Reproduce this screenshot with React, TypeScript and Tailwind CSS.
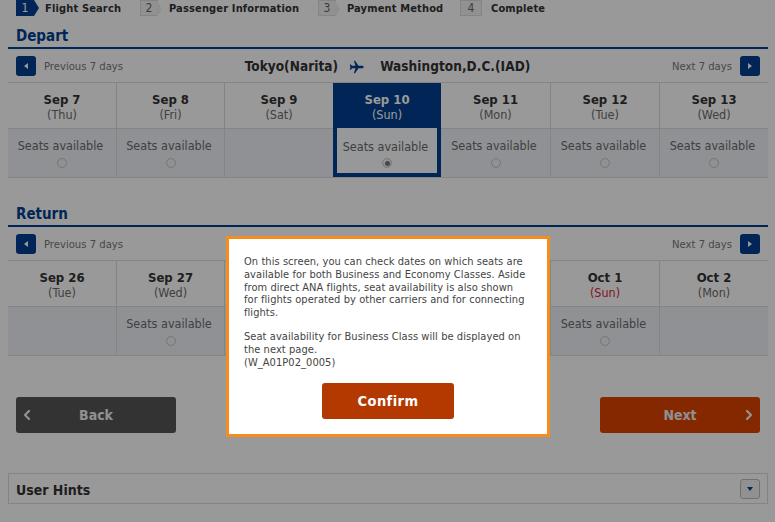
import React from 'react';
import { ChevronLeft, ChevronRight } from 'lucide-react';

interface Day {
  date: string;
  week: string;
  seats?: boolean;
  selected?: boolean;
  sunday?: boolean;
}

const departDays: Day[] = [
  { date: 'Sep 7', week: '(Thu)', seats: true },
  { date: 'Sep 8', week: '(Fri)', seats: true },
  { date: 'Sep 9', week: '(Sat)' },
  { date: 'Sep 10', week: '(Sun)', seats: true, selected: true },
  { date: 'Sep 11', week: '(Mon)', seats: true },
  { date: 'Sep 12', week: '(Tue)', seats: true },
  { date: 'Sep 13', week: '(Wed)', seats: true },
];

// the three middle days sit behind the dialog and can't be read
const returnDays: Day[] = [
  { date: 'Sep 26', week: '(Tue)' },
  { date: 'Sep 27', week: '(Wed)', seats: true },
  { date: '', week: '' },
  { date: '', week: '' },
  { date: '', week: '' },
  { date: 'Oct 1', week: '(Sun)', seats: true, sunday: true },
  { date: 'Oct 2', week: '(Mon)' },
];

const steps = [
  { n: '1', label: 'Flight Search', w: 'w-[124px]' },
  { n: '2', label: 'Passenger Information', w: 'w-[178px]' },
  { n: '3', label: 'Payment Method', w: 'w-[142px]' },
  { n: '4', label: 'Complete', w: 'w-auto' },
];

const Plane = () => (
  <svg width="15" height="14" viewBox="0 0 16 14" className="text-[#003f8f]">
    <path
      fill="currentColor"
      d="M5.2 0.4h1.300l3.600 5.300h3.600c1 0 1.900 0.500 1.900 1.300s-0.900 1.300-1.900 1.300h-3.600l-3.600 5.300H5.200l1.700-5.300H3.200l-1.200 1.500H0.800L1.500 7 0.800 4.200h1.200l1.200 1.500h3.700z"
    />
  </svg>
);

const Radio = ({ checked }: { checked?: boolean }) => (
  <span className="flex h-[10px] w-[10px] items-center justify-center rounded-full border border-[#c4c4c4] bg-[#f2f2f2]">
    {checked && <span className="h-[5px] w-[5px] rounded-full bg-[#777]" />}
  </span>
);

const PageButton = ({ dir }: { dir: 'prev' | 'next' }) => (
  <span className="flex h-5 w-5 items-center justify-center rounded-[3px] bg-[#003f8f]">
    <svg width="4" height="6" viewBox="0 0 4 6">
      <path fill="#fff" d={dir === 'prev' ? 'M4 0v6L0 3z' : 'M0 0v6l4-3z'} />
    </svg>
  </span>
);

const Calendar = ({ days }: { days: Day[] }) => (
  <div className="grid grid-cols-[108px_108px_109px_108px_109px_109px_109px] border-y border-[#dcdcdc]">
    {days.map((d, i) => (
      <div
        key={i}
        className={`flex h-[94px] flex-col ${i > 0 && !d.selected && !days[i - 1].selected ? 'border-l border-[#dcdcdc]' : ''} ${d.selected ? 'bg-[#003f8f]' : ''}`}
      >
        <div className={`flex h-[45px] flex-col items-center justify-center pt-[2px] leading-[15px] ${d.selected ? 'text-white' : 'text-[#333]'}`}>
          <span className="text-[13px] font-bold">{d.date}</span>
          <span className={`text-[12.5px] ${d.selected ? '' : d.sunday ? 'text-[#e0263c]' : 'text-[#6b6b6b]'}`}>{d.week}</span>
        </div>
        {d.selected ? (
          <div className="mx-1 mb-[4px] flex flex-1 flex-col items-center bg-[#fbfdff] pt-[11px] text-[12.5px] leading-[15px] text-[#6b6b6b]">
            <span className="mr-[3px]">Seats available</span>
            <span className="mt-[4px]"><Radio checked /></span>
          </div>
        ) : (
          <div className="flex flex-1 flex-col items-center border-t border-[#dcdcdc] bg-[#eff2f8] pt-[9px] text-[12.5px] leading-[15px] text-[#6b6b6b]">
            {d.seats && <span className="mr-[3px]">Seats available</span>}
            {d.seats && <span className="mt-[5px]"><Radio /></span>}
          </div>
        )}
      </div>
    ))}
  </div>
);

const Section = ({ title, days, route }: { title: string; days: Day[]; route?: boolean }) => (
  <section>
    <h2 className="border-b-2 border-[#003f8f] pb-[2px] pl-2 text-[15px] leading-[18px] font-bold text-[#003f8f]">{title}</h2>
    <div className="flex h-[33px] items-center justify-between px-2">
      <div className="flex items-center gap-2 text-[11.2px] text-[#777]">
        <PageButton dir="prev" />
        <span className="pt-[3px]">Previous 7 days</span>
      </div>
      {route && (
        <div className="mt-[2px] mr-[20px] flex items-center text-[13.5px] font-bold tracking-[0.05px] text-[#333]">
          <span>Tokyo(Narita)</span>
          <span className="mr-[16px] ml-[11px]"><Plane /></span>
          <span>Washington,D.C.(IAD)</span>
        </div>
      )}
      <div className="flex items-center gap-2 text-[11.2px] text-[#777]">
        <span className="pt-[3px]">Next 7 days</span>
        <PageButton dir="next" />
      </div>
    </div>
    <Calendar days={days} />
  </section>
);

export default function App() {
  return (
    <div className="relative h-[522px] w-[775px] overflow-hidden bg-white font-['DejaVu_Sans_Condensed','DejaVu_Sans','Liberation_Sans',sans-serif]">
      <div className="pr-[7px] pl-2">
        <ol className="flex h-[16px] items-center pl-2">
          {steps.map((s, i) => (
            <li key={s.n} className={`flex items-center ${s.w}`}>
              <span
                className={`relative flex h-4 items-center justify-center text-xs ${i === 3 ? 'w-[22px]' : 'w-[18px]'} ${i === 0 ? 'bg-[#003f8f] text-white' : 'border border-[#ddd] bg-[#f2f2f2] text-[#666]'}`}
              >
                {s.n}
                {i < 3 && (
                  <span
                    className={`absolute top-0 left-full h-0 w-0 border-y-[8px] border-l-[5px] border-y-transparent ${i === 0 ? 'border-l-[#003f8f]' : 'border-l-[#eee]'}`}
                  />
                )}
              </span>
              <span className={`mt-[3px] text-[11px] font-bold tracking-[0.15px] text-[#333] ${i === 3 ? 'ml-[9px]' : 'ml-[11px]'}`}>{s.label}</span>
            </li>
          ))}
        </ol>
        <div className="mt-[11px]">
          <Section title="Depart" days={departDays} route />
        </div>
        <div className="mt-[27px]">
          <Section title="Return" days={returnDays} />
        </div>
        <div className="mt-[41px] flex justify-between px-2">
          <button className="relative h-9 w-40 rounded-[3px] bg-[#555] text-sm font-bold text-[#f0f0f0]">
            <ChevronLeft className="absolute top-[10px] left-[3px] h-4 w-4" strokeWidth={3.5} />
            Back
          </button>
          <button className="relative h-9 w-40 rounded-[3px] bg-[#de4300] text-sm font-bold text-[#f0f0f0]">
            Next
            <ChevronRight className="absolute top-[10px] right-[3px] h-4 w-4" strokeWidth={3.5} />
          </button>
        </div>
        <div className="mt-10 flex h-[31px] items-center justify-between border border-[#dcdcdc] pr-[7px] pl-[7px] text-sm font-bold text-[#333]">
          <span className="pt-[2px]">User Hints</span>
          <span className="flex h-5 w-5 items-center justify-center rounded-[3px] border border-[#bbb] bg-[#f2f2f2]">
            <svg width="6" height="4" viewBox="0 0 6 4">
              <path fill="#003f8f" d="M0 0h6L3 4z" />
            </svg>
          </span>
        </div>
      </div>

      <div className="absolute inset-0 bg-black/40" />

      <div className="absolute top-[236px] left-[226px] h-[201px] w-[324px] border-[3px] border-[#f68b1f] bg-white pt-[17px] pr-[20px] pl-[15px] text-[11px] leading-[12.8px] tracking-[0.06px] text-[#444]">
        <p>
          On this screen, you can check dates on which seats are available for both Business and Economy Classes. Aside from direct ANA flights, seat availability is also shown for flights operated by other carriers and for connecting flights.
        </p>
        <p className="mt-[11px]">
          Seat availability for Business Class will be displayed on the next page.
          <br />
          (W_A01P02_0005)
        </p>
        <div className="mt-[14px] ml-[5px] flex justify-center">
          <button className="h-9 w-[132px] rounded-[3px] bg-[#b33900] text-[14.5px] font-bold tracking-[0.4px] text-white">Confirm</button>
        </div>
      </div>
    </div>
  );
}
